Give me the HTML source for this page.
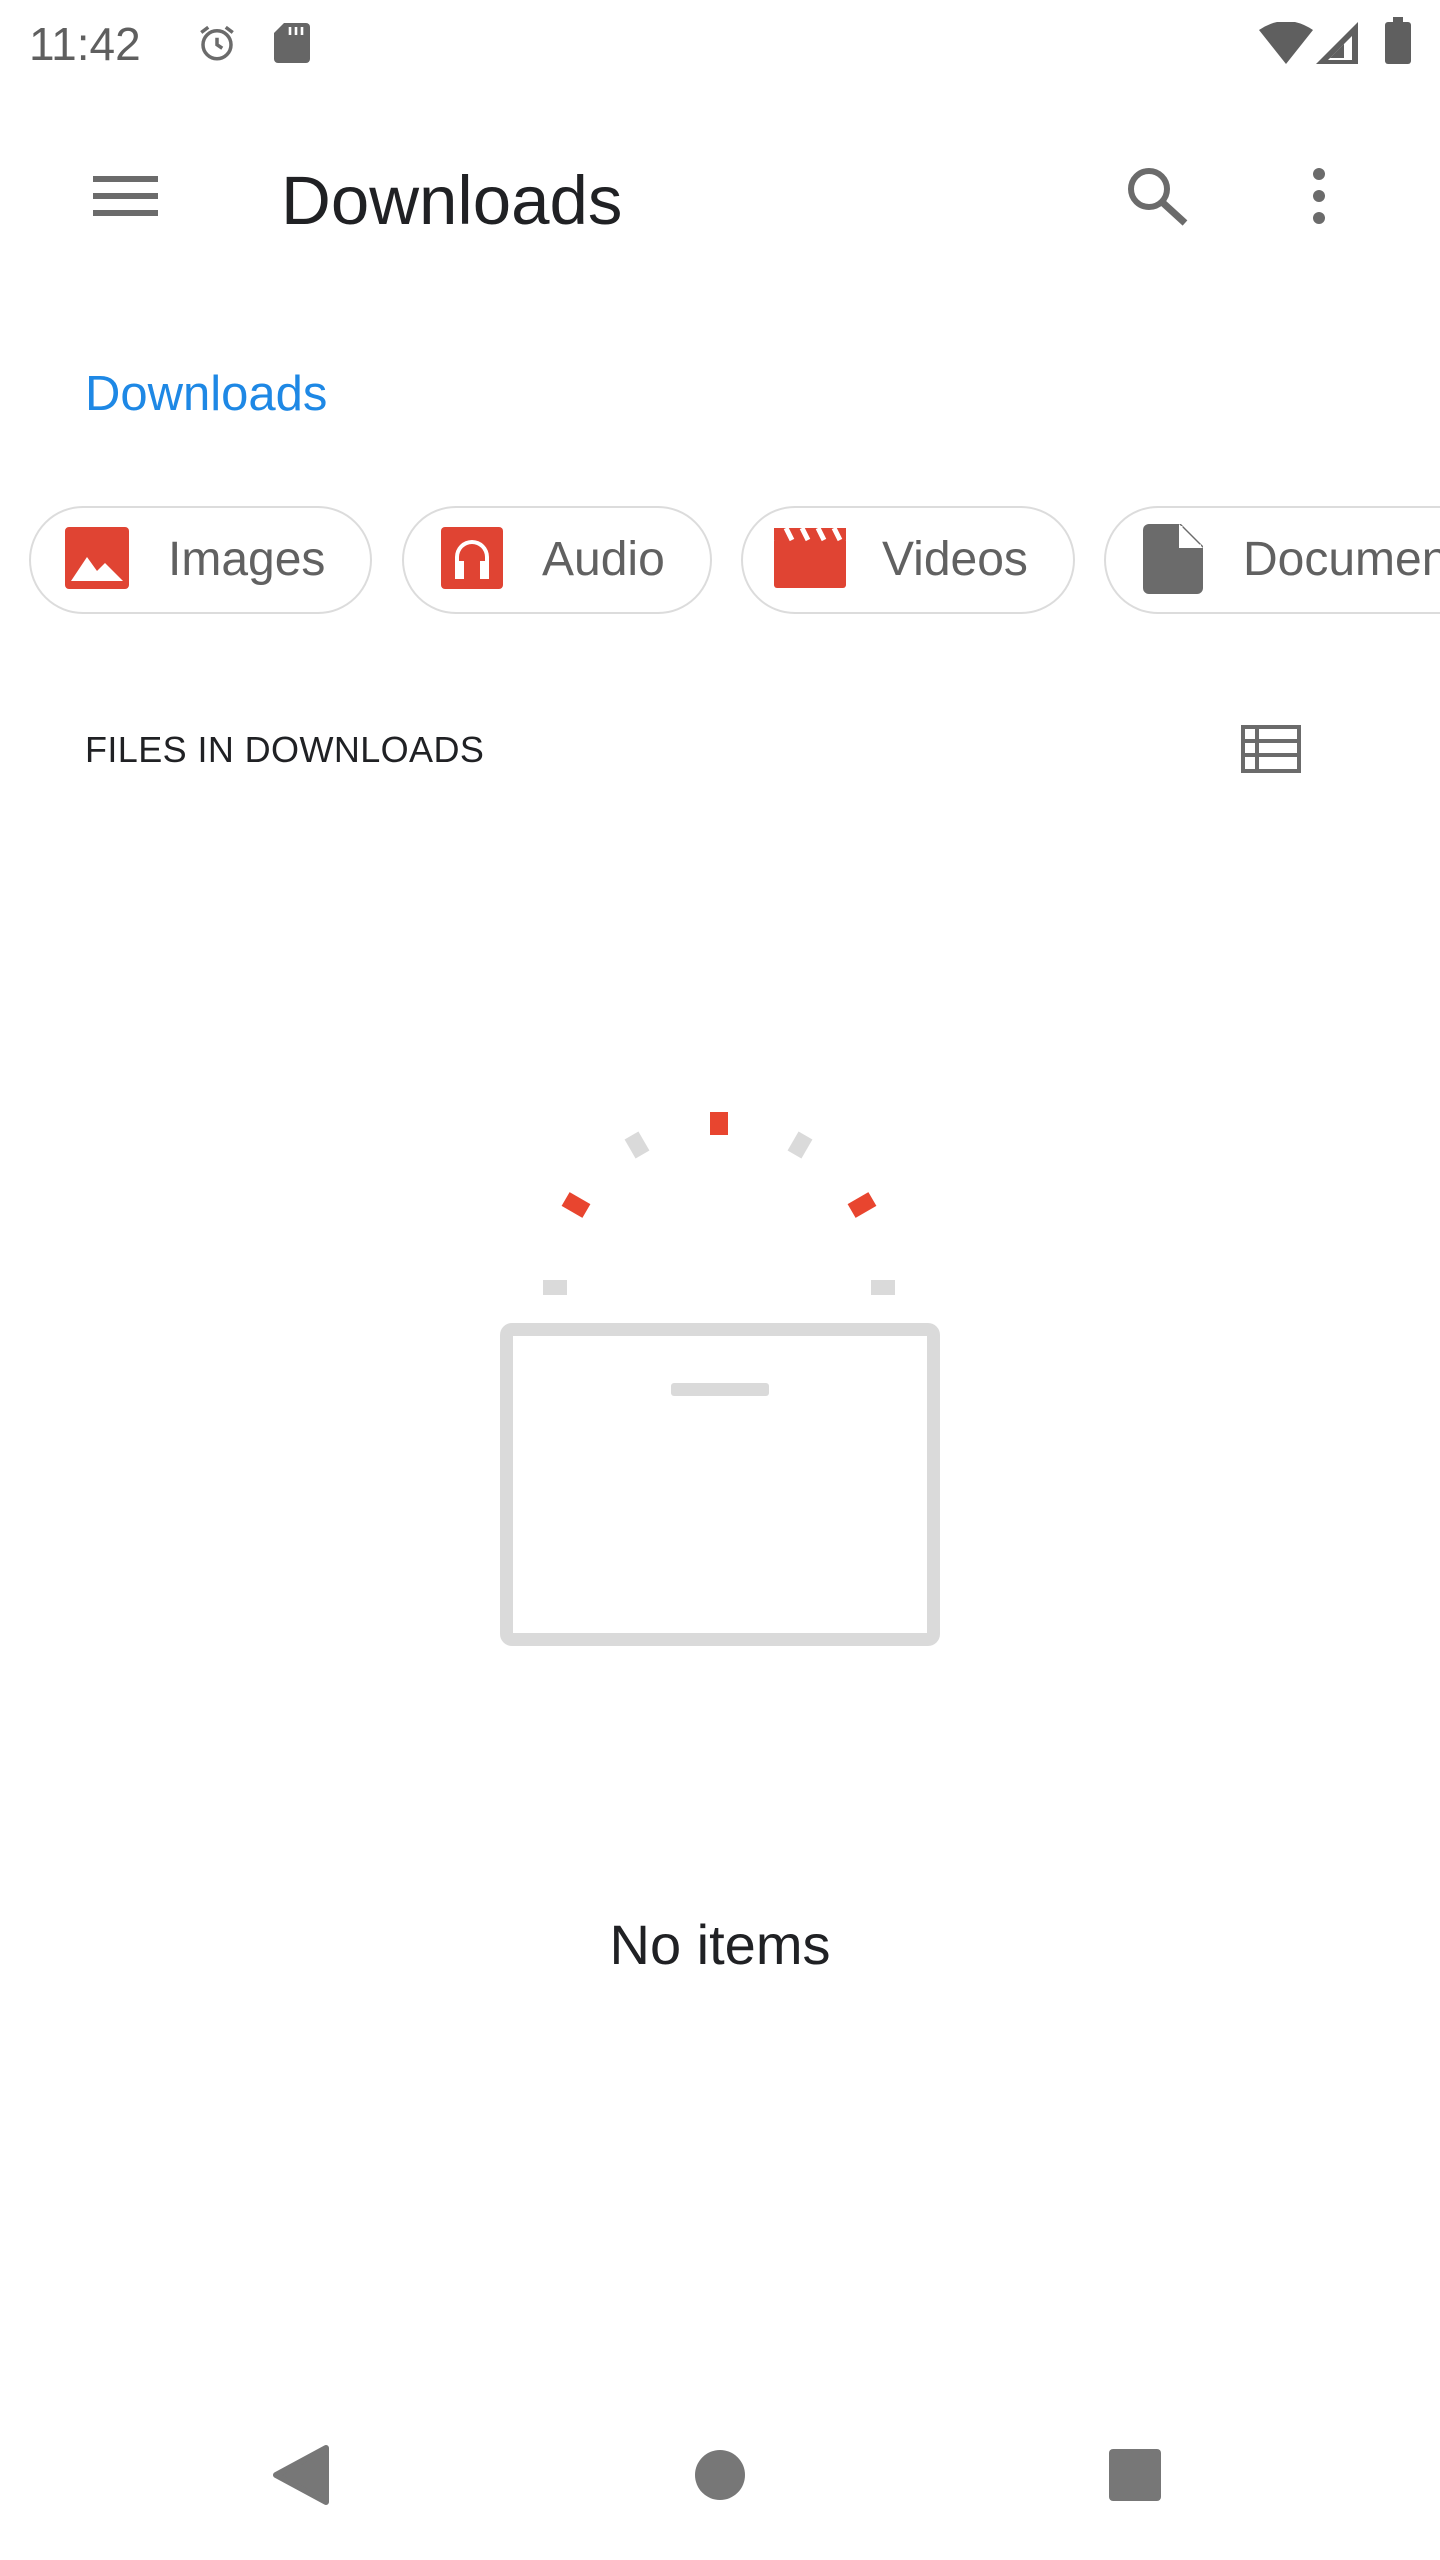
<!DOCTYPE html>
<html><head><meta charset="utf-8"><style>
html,body{margin:0;padding:0;background:#fff;}
body{width:1440px;height:2560px;position:relative;overflow:hidden;font-family:"Liberation Sans",sans-serif;}
.a{position:absolute;}
.chip{position:absolute;top:506px;height:104px;border:2px solid #dcdcdc;border-radius:54px;background:#fff;}
.ct{position:absolute;top:530px;font-size:48px;color:#616161;line-height:60px;white-space:nowrap;}
</style></head><body>
<div class="a" style="left:29px;top:14px;font-size:46px;color:#5f5f5f;line-height:60px;">11:42</div>
<svg class="a" style="left:196px;top:22px" width="42" height="42" viewBox="0 0 24 24"><circle cx="12" cy="13" r="8" fill="none" stroke="#6b6b6b" stroke-width="2"/><path d="M12 9v4l3 2M3 6l4-3M21 6l-4-3" stroke="#6b6b6b" stroke-width="2" fill="none"/></svg>
<svg class="a" style="left:274px;top:23px" width="36" height="40" viewBox="0 0 18 20"><path d="M5 0h11a2 2 0 0 1 2 2v16a2 2 0 0 1-2 2H2a2 2 0 0 1-2-2V5z" fill="#666"/><path d="M8 2v4M11 2v4M14 2v4" stroke="#fff" stroke-width="1.3"/></svg>
<svg class="a" style="left:1259px;top:22px" width="54" height="42" viewBox="0 0 54 42"><path d="M0 8Q27-10 54 8L27 42z" fill="#5f5f5f"/></svg>
<svg class="a" style="left:1316px;top:22px" width="42" height="42" viewBox="0 0 42 42"><path d="M42 0V42H0z" fill="#5f5f5f"/><path d="M36 14V38H12z" fill="#fff"/><path d="M28 22V36H14z" fill="#5f5f5f"/></svg>
<div class="a" style="left:1385px;top:22px;width:26px;height:42px;background:#5f5f5f;border-radius:3px;"></div>
<div class="a" style="left:1393px;top:17px;width:10px;height:6px;background:#5f5f5f;"></div>
<div class="a" style="left:93px;top:176px;width:65px;height:6px;background:#6b6b6b;"></div>
<div class="a" style="left:93px;top:193px;width:65px;height:6px;background:#6b6b6b;"></div>
<div class="a" style="left:93px;top:210px;width:65px;height:6px;background:#6b6b6b;"></div>
<div class="a" style="left:281px;top:161px;font-size:69px;color:#202124;line-height:80px;">Downloads</div>
<svg class="a" style="left:1125px;top:165px" width="66" height="62" viewBox="0 0 66 62"><circle cx="24" cy="24" r="18" fill="none" stroke="#6b6b6b" stroke-width="6"/><path d="M37 37L60 58" stroke="#6b6b6b" stroke-width="7"/></svg>
<div class="a" style="left:1313px;top:168px;width:12px;height:12px;border-radius:6px;background:#6b6b6b;box-shadow:0 22px 0 #6b6b6b,0 44px 0 #6b6b6b;"></div>
<div class="a" style="left:85px;top:364px;font-size:49px;color:#1e88e5;line-height:60px;">Downloads</div>
<div class="chip" style="left:29px;width:339px;"></div>
<div class="chip" style="left:402px;width:306px;"></div>
<div class="chip" style="left:741px;width:330px;"></div>
<div class="chip" style="left:1104px;width:400px;"></div>
<svg class="a" style="left:65px;top:527px" width="64" height="62" viewBox="0 0 64 62"><rect width="64" height="62" rx="4" fill="#e04433"/><path d="M6 54L22 30L32 44L40 36L58 54z" fill="#fff"/></svg>
<div class="ct" style="left:168px;">Images</div>
<svg class="a" style="left:441px;top:527px" width="62" height="62" viewBox="0 0 62 62"><rect width="62" height="62" rx="4" fill="#e04433"/><path d="M14 52V30a17 17 0 0 1 34 0v22h-9V34h5V30a13 13 0 0 0-26 0v4h5v18z" fill="#fff"/></svg>
<div class="ct" style="left:542px;">Audio</div>
<svg class="a" style="left:774px;top:524px" width="72" height="64" viewBox="0 0 72 64"><rect x="0" y="14" width="72" height="50" rx="3" fill="#e04433"/><path d="M0 4h72v12H0z" fill="#e04433"/><path d="M12 4l6 12M28 4l6 12M44 4l6 12M60 4l6 12" stroke="#fff" stroke-width="5"/></svg>
<div class="ct" style="left:882px;">Videos</div>
<svg class="a" style="left:1143px;top:524px" width="60" height="70" viewBox="0 0 60 70"><path d="M6 0h32l22 22v42a6 6 0 0 1-6 6H6a6 6 0 0 1-6-6V6a6 6 0 0 1 6-6z" fill="#6b6b6b"/><path d="M36 0v24h24" fill="#fff"/><path d="M38 2v20h20" fill="none" stroke="#fff" stroke-width="3"/></svg>
<div class="ct" style="left:1243px;">Documents</div>
<div class="a" style="left:85px;top:728px;font-size:36px;color:#202124;line-height:44px;letter-spacing:0.4px;">FILES IN DOWNLOADS</div>
<svg class="a" style="left:1241px;top:725px" width="60" height="48" viewBox="0 0 60 48"><rect x="2" y="2" width="56" height="44" fill="none" stroke="#6b6b6b" stroke-width="4"/><path d="M2 16h56M2 30h56M16 2v44" stroke="#6b6b6b" stroke-width="4"/></svg>
<div class="a" style="left:500px;top:1323px;width:414px;height:297px;border:13px solid #dadada;border-radius:12px;"></div>
<div class="a" style="left:671px;top:1383px;width:98px;height:13px;background:#dadada;border-radius:3px;"></div>
<div class="a" style="left:710px;top:1112px;width:18px;height:23px;background:#e8452f;"></div>
<div class="a" style="left:629px;top:1134px;width:16px;height:22px;background:#dadada;transform:rotate(-30deg);"></div>
<div class="a" style="left:792px;top:1134px;width:16px;height:22px;background:#dadada;transform:rotate(30deg);"></div>
<div class="a" style="left:564px;top:1197px;width:24px;height:16px;background:#e8452f;transform:rotate(30deg);"></div>
<div class="a" style="left:850px;top:1197px;width:24px;height:16px;background:#e8452f;transform:rotate(-30deg);"></div>
<div class="a" style="left:543px;top:1280px;width:24px;height:15px;background:#dadada;"></div>
<div class="a" style="left:871px;top:1280px;width:24px;height:15px;background:#dadada;"></div>
<div class="a" style="left:0;width:1440px;text-align:center;top:1912px;font-size:56px;color:#202124;line-height:66px;">No items</div>
<svg class="a" style="left:272px;top:2444px" width="58" height="62" viewBox="0 0 58 62"><path d="M54 4V58L4 31z" fill="#777" stroke="#777" stroke-width="6" stroke-linejoin="round"/></svg>
<div class="a" style="left:695px;top:2450px;width:50px;height:50px;border-radius:25px;background:#777;"></div>
<div class="a" style="left:1109px;top:2449px;width:52px;height:52px;border-radius:4px;background:#777;"></div>
</body></html>
